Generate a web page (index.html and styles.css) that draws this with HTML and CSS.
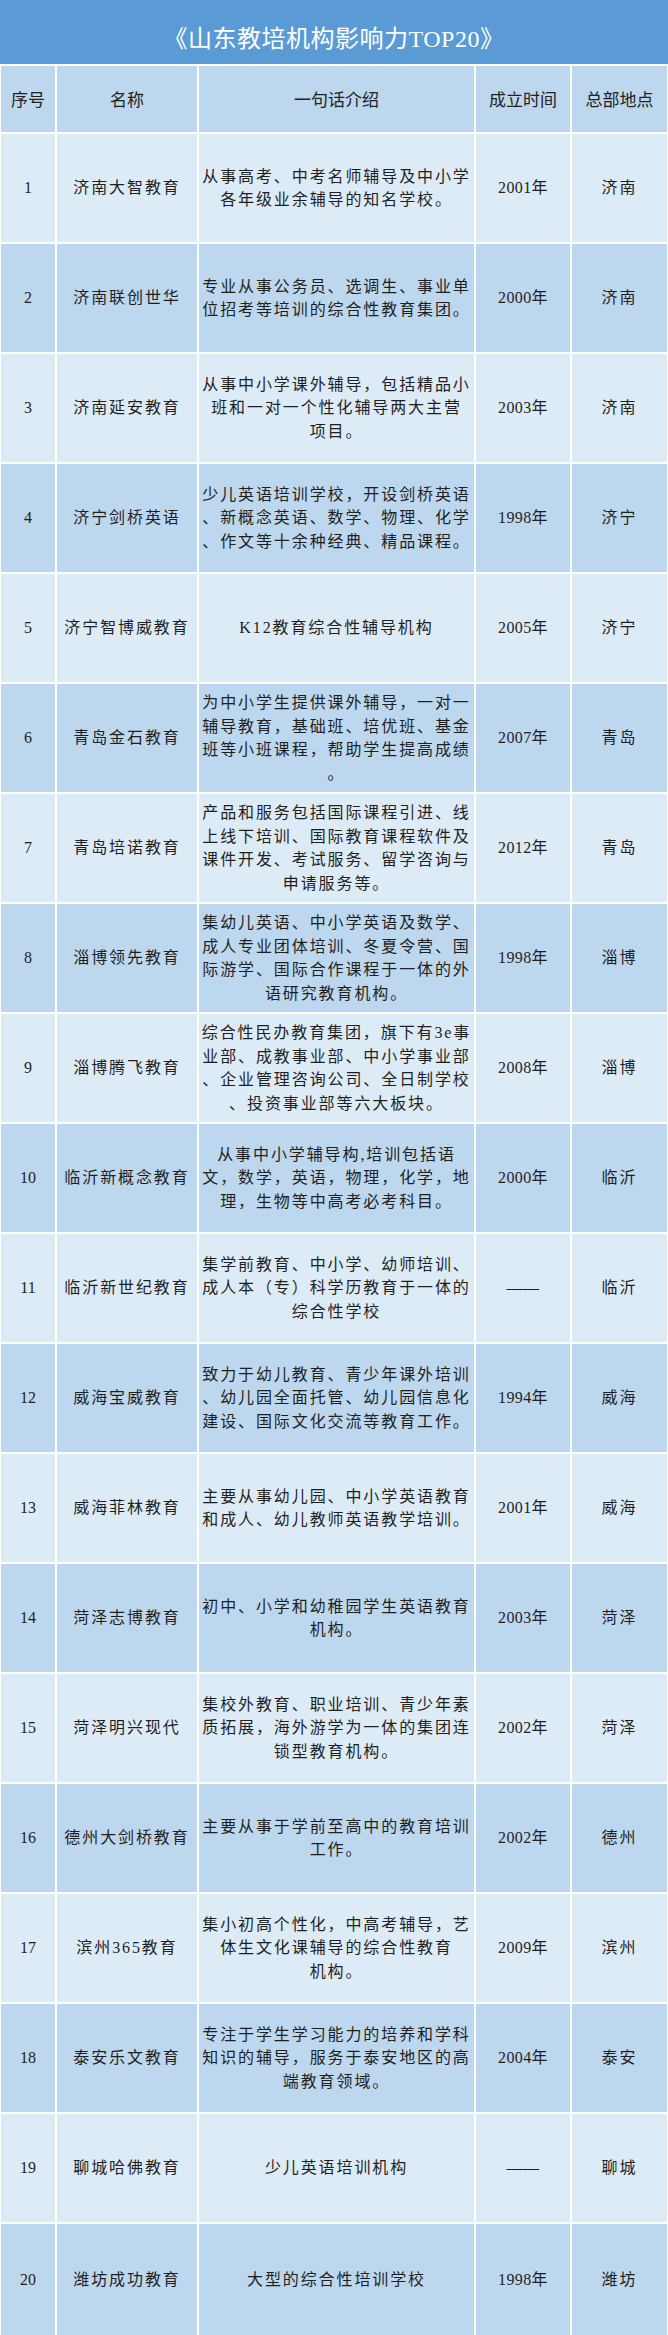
FILE: index.html
```html
<!DOCTYPE html>
<html lang="zh-CN">
<head>
<meta charset="utf-8">
<title>山东教培机构影响力TOP20</title>
<link rel="stylesheet" href="styles.css">
</head>
<body>
<div class="sheet">
  <div class="title">《山东教培机构影响力TOP20》</div>
  <div class="row head">
    <div class="cell">序号</div>
    <div class="cell">名称</div>
    <div class="cell">一句话介绍</div>
    <div class="cell">成立时间</div>
    <div class="cell">总部地点</div>
  </div>

  <div class="row odd">
    <div class="cell num">1</div>
    <div class="cell name">济南大智教育</div>
    <div class="cell desc">从事高考、中考名师辅导及中小学<br>各年级业余辅导的知名学校。</div>
    <div class="cell year">2001年</div>
    <div class="cell city">济南</div>
  </div>
  <div class="row even">
    <div class="cell num">2</div>
    <div class="cell name">济南联创世华</div>
    <div class="cell desc">专业从事公务员、选调生、事业单<br>位招考等培训的综合性教育集团。</div>
    <div class="cell year">2000年</div>
    <div class="cell city">济南</div>
  </div>
  <div class="row odd">
    <div class="cell num">3</div>
    <div class="cell name">济南延安教育</div>
    <div class="cell desc">从事中小学课外辅导，包括精品小<br>班和一对一个性化辅导两大主营<br>项目。</div>
    <div class="cell year">2003年</div>
    <div class="cell city">济南</div>
  </div>
  <div class="row even">
    <div class="cell num">4</div>
    <div class="cell name">济宁剑桥英语</div>
    <div class="cell desc">少儿英语培训学校，开设剑桥英语<br>、新概念英语、数学、物理、化学<br>、作文等十余种经典、精品课程。</div>
    <div class="cell year">1998年</div>
    <div class="cell city">济宁</div>
  </div>
  <div class="row odd">
    <div class="cell num">5</div>
    <div class="cell name">济宁智博威教育</div>
    <div class="cell desc">K12教育综合性辅导机构</div>
    <div class="cell year">2005年</div>
    <div class="cell city">济宁</div>
  </div>
  <div class="row even">
    <div class="cell num">6</div>
    <div class="cell name">青岛金石教育</div>
    <div class="cell desc">为中小学生提供课外辅导，一对一<br>辅导教育，基础班、培优班、基金<br>班等小班课程，帮助学生提高成绩<br>。</div>
    <div class="cell year">2007年</div>
    <div class="cell city">青岛</div>
  </div>
  <div class="row odd">
    <div class="cell num">7</div>
    <div class="cell name">青岛培诺教育</div>
    <div class="cell desc">产品和服务包括国际课程引进、线<br>上线下培训、国际教育课程软件及<br>课件开发、考试服务、留学咨询与<br>申请服务等。</div>
    <div class="cell year">2012年</div>
    <div class="cell city">青岛</div>
  </div>
  <div class="row even">
    <div class="cell num">8</div>
    <div class="cell name">淄博领先教育</div>
    <div class="cell desc">集幼儿英语、中小学英语及数学、<br>成人专业团体培训、冬夏令营、国<br>际游学、国际合作课程于一体的外<br>语研究教育机构。</div>
    <div class="cell year">1998年</div>
    <div class="cell city">淄博</div>
  </div>
  <div class="row odd">
    <div class="cell num">9</div>
    <div class="cell name">淄博腾飞教育</div>
    <div class="cell desc">综合性民办教育集团，旗下有3e事<br>业部、成教事业部、中小学事业部<br>、企业管理咨询公司、全日制学校<br>、投资事业部等六大板块。</div>
    <div class="cell year">2008年</div>
    <div class="cell city">淄博</div>
  </div>
  <div class="row even">
    <div class="cell num">10</div>
    <div class="cell name">临沂新概念教育</div>
    <div class="cell desc">从事中小学辅导构,培训包括语<br>文，数学，英语，物理，化学，地<br>理，生物等中高考必考科目。</div>
    <div class="cell year">2000年</div>
    <div class="cell city">临沂</div>
  </div>
  <div class="row odd">
    <div class="cell num">11</div>
    <div class="cell name">临沂新世纪教育</div>
    <div class="cell desc">集学前教育、中小学、幼师培训、<br>成人本（专）科学历教育于一体的<br>综合性学校</div>
    <div class="cell year">——</div>
    <div class="cell city">临沂</div>
  </div>
  <div class="row even">
    <div class="cell num">12</div>
    <div class="cell name">威海宝威教育</div>
    <div class="cell desc">致力于幼儿教育、青少年课外培训<br>、幼儿园全面托管、幼儿园信息化<br>建设、国际文化交流等教育工作。</div>
    <div class="cell year">1994年</div>
    <div class="cell city">威海</div>
  </div>
  <div class="row odd">
    <div class="cell num">13</div>
    <div class="cell name">威海菲林教育</div>
    <div class="cell desc">主要从事幼儿园、中小学英语教育<br>和成人、幼儿教师英语教学培训。</div>
    <div class="cell year">2001年</div>
    <div class="cell city">威海</div>
  </div>
  <div class="row even">
    <div class="cell num">14</div>
    <div class="cell name">菏泽志博教育</div>
    <div class="cell desc">初中、小学和幼稚园学生英语教育<br>机构。</div>
    <div class="cell year">2003年</div>
    <div class="cell city">菏泽</div>
  </div>
  <div class="row odd">
    <div class="cell num">15</div>
    <div class="cell name">菏泽明兴现代</div>
    <div class="cell desc">集校外教育、职业培训、青少年素<br>质拓展，海外游学为一体的集团连<br>锁型教育机构。</div>
    <div class="cell year">2002年</div>
    <div class="cell city">菏泽</div>
  </div>
  <div class="row even">
    <div class="cell num">16</div>
    <div class="cell name">德州大剑桥教育</div>
    <div class="cell desc">主要从事于学前至高中的教育培训<br>工作。</div>
    <div class="cell year">2002年</div>
    <div class="cell city">德州</div>
  </div>
  <div class="row odd">
    <div class="cell num">17</div>
    <div class="cell name">滨州365教育</div>
    <div class="cell desc">集小初高个性化，中高考辅导，艺<br>体生文化课辅导的综合性教育<br>机构。</div>
    <div class="cell year">2009年</div>
    <div class="cell city">滨州</div>
  </div>
  <div class="row even">
    <div class="cell num">18</div>
    <div class="cell name">泰安乐文教育</div>
    <div class="cell desc">专注于学生学习能力的培养和学科<br>知识的辅导，服务于泰安地区的高<br>端教育领域。</div>
    <div class="cell year">2004年</div>
    <div class="cell city">泰安</div>
  </div>
  <div class="row odd">
    <div class="cell num">19</div>
    <div class="cell name">聊城哈佛教育</div>
    <div class="cell desc">少儿英语培训机构</div>
    <div class="cell year">——</div>
    <div class="cell city">聊城</div>
  </div>
  <div class="row even last">
    <div class="cell num">20</div>
    <div class="cell name">潍坊成功教育</div>
    <div class="cell desc">大型的综合性培训学校</div>
    <div class="cell year">1998年</div>
    <div class="cell city">潍坊</div>
  </div>
</div>
</body>
</html>
```

FILE: styles.css
```css
html, body {
  margin: 0;
  padding: 0;
  background: #ffffff;
}

.sheet {
  width: 668px;
  display: flex;
  flex-direction: column;
  gap: 2px;
  font-family: "Liberation Serif", "Noto Sans CJK SC", serif;
  color: #1f1f1f;
}

.title {
  height: 64px;
  box-sizing: border-box;
  padding-top: 8px;
  background: #5b9bd5;
  color: #ffffff;
  font-size: 24px;
  display: flex;
  align-items: center;
  justify-content: center;
  letter-spacing: 0.5px;
}

.row {
  display: grid;
  grid-template-columns: 54px 140px 275px 94px 95px;
  column-gap: 2px;
  padding: 0 1px;
  height: 108px;
}

.row.head {
  height: 66px;
}

.row.last {
  height: 111px;
}

.cell {
  display: flex;
  align-items: center;
  justify-content: center;
  text-align: center;
  font-size: 16px;
  line-height: 23.5px;
}

.head .cell {
  background: #bdd7ee;
  font-family: "Noto Sans CJK SC", sans-serif;
  font-size: 17px;
  color: #222222;
}

.odd .cell {
  background: #ddebf7;
}

.even .cell {
  background: #bdd7ee;
}

.name,
.desc,
.city {
  letter-spacing: 1.9px;
}

.year {
  letter-spacing: 0.4px;
}

.num {
  font-size: 16px;
}
```
